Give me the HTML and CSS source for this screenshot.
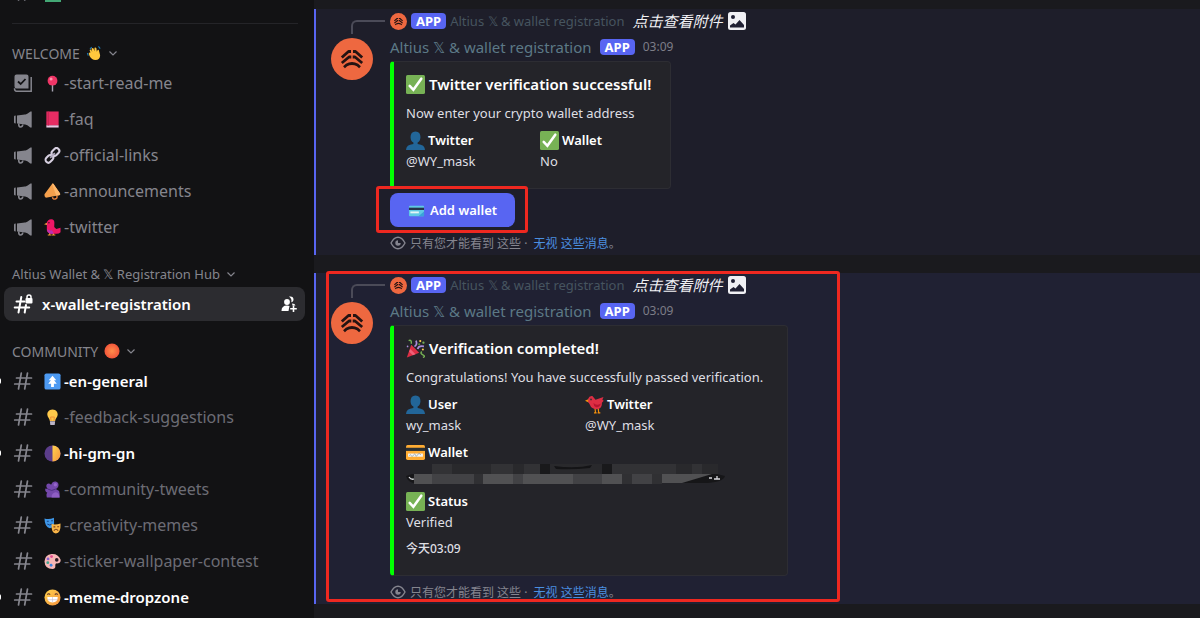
FILE: index.html
```html
<!DOCTYPE html>
<html lang="zh-CN">
<head>
  <meta charset="UTF-8">
  <meta name="viewport" content="width=device-width, initial-scale=1.0">
  <title>x-wallet-registration</title>
  <link rel="stylesheet" href="styles.css">
</head>
<body>
  <svg class="sprite" aria-hidden="true">
    <linearGradient id="g-sun" x1="0" y1="0" x2="1" y2="1"><stop offset="0" stop-color="#ffd34d"/><stop offset="1" stop-color="#f5923e"/></linearGradient>
    <radialGradient id="g-orb"><stop offset="0" stop-color="#ff8d4a"/><stop offset="1" stop-color="#f2553a"/></radialGradient>
    <symbol id="hash" viewBox="0 0 20 20"><path d="M8.300 2 5.500 18M14.500 2 11.700 18M3.500 7h15M1.700 13h15" fill="none" stroke="currentColor" stroke-width="1.700" stroke-linecap="round"/></symbol>
    <symbol id="hash-lock" viewBox="0 0 20 20"><path d="M8.300 3 5.500 18.500M13 11 11.700 18.500M3.500 7.500h8M1.700 13.500h14.500" fill="none" stroke="currentColor" stroke-width="2" stroke-linecap="round"/><rect x="12.500" y="4" width="7" height="5.500" rx="1" fill="currentColor"/><path d="M14 5V3a2 2 0 0 1 4 0v2" fill="none" stroke="currentColor" stroke-width="1.500"/></symbol>
    <symbol id="rules" viewBox="0 0 20 20"><path d="M3.500 1.500h10a2 2 0 0 1 2 2v12H3.500a2 2 0 0 1-2-2v-10a2 2 0 0 1 2-2z" fill="currentColor"/><path d="M5 8.500 7.700 11l4.800-5" fill="none" stroke="#121214" stroke-width="1.800"/><path d="M18.200 4v14.300H3.500q-2 0-2-3" fill="none" stroke="currentColor" stroke-width="1.500"/></symbol>
    <symbol id="mega" viewBox="0 0 20 20"><path d="M18.700 2.500v16h-1.500c-2-2-3.700-2.700-5.700-3.200V5.700c2.500-.7 4-1.500 6-3.200zM4 6.500l8-1v10l-8-1zM1 7.500q0-1 1.700-1v8Q1 14.500 1 13.500z" fill="currentColor"/><path d="M5.800 14.500q-.3 3.500 1.700 3.500t2.300-2.500" fill="none" stroke="currentColor" stroke-width="1.600"/></symbol>
    <symbol id="chev" viewBox="0 0 10 10"><path d="M1.500 3.500 5 7l3.500-3.500" fill="none" stroke="currentColor" stroke-width="1.200"/></symbol>
    <symbol id="invite" viewBox="0 0 18 18"><circle cx="7" cy="7" r="2.900" fill="currentColor"/><path d="M1.500 16q0-5.500 5.500-5.500 1.500 0 2.500.6l-1 4.900zM9 1.500c3-.5 4.500.5 4.500 3 0 1.500-.8 2.500-2.200 2.800C12 5 11 3 9 1.500zM12 8.500q3 0 3.500 2h-3z" fill="currentColor"/><path d="M13.500 10.500v6.500M10.200 13.700h6.600" stroke="currentColor" stroke-width="1.600"/></symbol>
    <symbol id="wave" viewBox="0 0 18 18"><path d="M2.500 12 1.500 9M4.500 4.500 6.500 2.500M14 1.500l2 2.500" stroke="#1a78b5" stroke-width="1.200"/><path d="M5 8.500 4 5.500q1-1.200 2 .2L7 8l-.8-4Q7.500 2.500 8.500 4l1 3 .1-3.800Q11 2 11.700 3.700l.5 4 .8-2.200q1.500-.6 1.600 1l1.300 5q0 5-5.400 5.500-4 0-6.500-4.500L3 9.500q.6-1.300 2-1z" fill="#ffc83d"/></symbol>
    <symbol id="pin" viewBox="0 0 18 18"><path d="M9 9v8.500" stroke="#a6a3b3" stroke-width="1.500"/><circle cx="9" cy="6" r="5.200" fill="#ef3566"/><circle cx="7.500" cy="4.300" r="1.600" fill="#ff94ad"/></symbol>
    <symbol id="book" viewBox="0 0 18 18"><path d="M2.500.5h13v15h-13z" fill="#e72c63"/><path d="M2.500 15.200h13v2.300h-13z" fill="#e8c8e5"/><path d="M4.500.5v15" stroke="#bd244f"/></symbol>
    <symbol id="link" viewBox="0 0 18 18"><g fill="none" stroke="#d6cfe0" stroke-width="2.200"><rect x="7.800" y="2.400" width="9" height="6" rx="3" transform="rotate(-45 12 5.500)"/><rect x="1.300" y="9.300" width="9" height="6" rx="3" transform="rotate(-45 6 12.500)"/></g><path d="M6.500 11.500l5-5" stroke="#b2aabf" stroke-width="1.800"/></symbol>
    <symbol id="horn" viewBox="0 0 18 18"><path d="M8.500 1q1-1 2 .5L17 11q.7 1.700-1 2L2 15.500q-2-1.200-1.500-3.500z" fill="#f5a04c"/><path d="M8.500 1 13 13.500l3-.5q1.700-.3 1-2L10.500 1.500Q9.500 0 8.500 1z" fill="#ffb86b"/><path d="M9 15q.3 3 3.500 1.700 2-1 1-3" fill="none" stroke="#e6823c" stroke-width="1.500"/></symbol>
    <symbol id="bird" viewBox="0 0 18 18"><path d="M6 14v3.500M10 14v3.500M4 17h4M8.500 17h3.500" stroke="#f59a2e" stroke-width="1.200"/><path d="M0 5.500 4 3.500v3z" fill="#f5a53a"/><path d="M3 4q1-4 5-3.700Q11 .5 11 4l-.2 4.500L13 10.500l4.500-1.300V14q-2 2-5.500 1.500H7Q2.500 14.500 3 10z" fill="#ef1766"/><path d="M3.500 10.500q2 2 5 1.500l2 3.500H7Q3 14.500 3.500 10.500z" fill="#b632b4"/><circle cx="5.200" cy="4" r=".8" fill="#3b1524"/></symbol>
    <symbol id="orb" viewBox="0 0 18 18"><circle cx="9" cy="9" r="8.500" fill="url(#g-orb)"/></symbol>
    <symbol id="up" viewBox="0 0 18 18"><rect x=".5" y=".5" width="17" height="17" rx="2" fill="#4d9af2"/><path d="M9 2.800 13 7.800h-2.300l2.800 3.700h-3v3.300h-3v-3.300h-3l2.800-3.700H5z" fill="#fff"/></symbol>
    <symbol id="bulb" viewBox="0 0 18 18"><path d="M9 .5c4 0 5.500 3 5.500 5.300 0 3-2.500 4-2.700 7H6.200c-.2-3-2.700-4-2.700-7C3.500 3.500 5 .5 9 .5z" fill="#ffc94a"/><path d="M7.500 12.500 7 8.500h4l-.5 4" fill="none" stroke="#f08d35"/><path d="M6.200 13h5.600l-.5 4H6.700z" fill="#bbb4c6"/></symbol>
    <symbol id="moon" viewBox="0 0 18 18"><circle cx="9" cy="9" r="8.500" fill="#5b3d8a"/><path d="M9 .5a8.500 8.500 0 0 1 0 17z" fill="url(#g-sun)"/></symbol>
    <symbol id="crowd" viewBox="0 0 18 18"><path d="M3 17.500q-1-4 .5-5Q.5 11 1.500 8L4 8.500Q1.500 6 3 3.500 5 1.500 7.500 4 9 0 12.500.5q4 1.500 2.500 5.500-1 2-2.500 2.500l3.500 2q1 3 .5 7z" fill="#7448ab"/><path d="M8 17.500q0-4.500 4-5.500 4 0 4.500 5.500z" fill="#8f5ec4"/><path d="M4 8.500q4 3 8.500 0" fill="none" stroke="#4c2c80"/><circle cx="12" cy="4" r="1.800" fill="#9565c9"/></symbol>
    <symbol id="masks" viewBox="0 0 18 18"><path d="M.5 1.500q5 1.500 10-.7l.2 5.700q-.7 5-4.500 5.300Q.8 11 .5 1.500z" fill="#3e97e8"/><path d="M3 4.500h2M7.500 4h2M3.500 7.500q2.500 2 5 0" stroke="#173c7c" fill="none"/><path d="M8 7.500q4.500 1 9.500-.7.500 10-5 10.700Q7.500 17.500 8 7.500z" fill="#f8b548"/><path d="M10 10.500h2M14 10.300h2M10.500 14.500q2-3 4.500 0" stroke="#7c431c" fill="none" stroke-width="1.200"/></symbol>
    <symbol id="palette" viewBox="0 0 18 18"><path d="M8 1Q15 .5 17.500 7q.7 3.500-3 4-3-.5-2.500 2.500.3 3.500-3 3.500Q1 17 .5 9 1 1.500 8 1z" fill="#f7b6b5"/><circle cx="8" cy="3.800" r="1.500" fill="#e44791"/><circle cx="4.300" cy="6.300" r="1.500" fill="#8963d0"/><circle cx="4" cy="10.200" r="1.500" fill="#3ea58e"/><circle cx="7.500" cy="13" r="1.500" fill="#3c83de"/><circle cx="13.500" cy="7.300" r="1.900" fill="#2c1a24"/></symbol>
    <symbol id="grin" viewBox="0 0 18 18"><circle cx="9" cy="9" r="8.500" fill="url(#g-sun)"/><path d="M3.500 6q1.500-2 3 0M11.500 6q1.500-2 3 0" fill="none" stroke="#583227" stroke-width="1.200"/><path d="M3.500 8.500h11q.3 5.500-5.500 5.700-5.700-.2-5.500-5.700z" fill="#fff"/><path d="M3.700 11.300h10.600M9 8.500v5.500" stroke="#c2b8ce" stroke-width=".6"/></symbol>
    <symbol id="check" viewBox="0 0 18 18"><rect width="18" height="18" rx="1.500" fill="#77b255"/><path d="M3.500 10.300 7 14l7.500-10.500" fill="none" stroke="#fff" stroke-width="2.400" stroke-linecap="round"/></symbol>
    <symbol id="person" viewBox="0 0 18 18"><path d="M9 .5q4.800.3 4.700 5.500-.3 4-2.700 5v1.300q7 .7 7 5.700H0q0-5 7-5.700V11Q4.500 10 4.300 6 4.200.8 9 .5z" fill="#226699"/></symbol>
    <symbol id="party" viewBox="0 0 18 18"><path d="M5 5.500 12.500 13 .8 17.500z" fill="#dd2e44"/><path d="M4 9.500l5 5-2.500 1L3 12z" fill="#ef6179"/><path d="M2.500 1.500q3-1.200 2.500 3M15 12q-2 1.500 1 3t0 2.500" fill="none" stroke="#77b255" stroke-width="1.300"/><path d="M8 7q3-1.500 1.500-5.500M11 9.500q1-3.500 6-2.500" fill="none" stroke="#aa8dd8" stroke-width="1.600"/><circle cx="13.500" cy="2" r="1" fill="#ffcc4d"/><circle cx="16.500" cy="3.500" r="1.100" fill="#77b255"/><circle cx="12.500" cy="5" r="1" fill="#5c913b"/><circle cx="16" cy="10" r="1" fill="#ffcc4d"/><circle cx="1.500" cy="7" r=".8" fill="#aa8dd8"/></symbol>
    <symbol id="redbird" viewBox="0 0 18 18"><path d="M9.500 12.500 10 17M12.500 12.500 13 17M8.500 17h2.500M12 17h2.500" stroke="#f4900c" stroke-width="1.100"/><path d="M0 5.500 4 3.500v3.800z" fill="#f4900c"/><path d="M3 3.500Q4 .5 7 1l3 3.500L17.500 2l-1 2.500 1.200 1L16 7.300q.5 5.500-4.500 6.200Q6 13.500 4.500 9L3 6.500z" fill="#dd2e44"/><path d="M8 7.500q3 3 7 .5-1 4-4.500 3.500Q8 10.500 8 7.500z" fill="#b81530"/><circle cx="5.700" cy="4.200" r=".8" fill="#292f33"/></symbol>
    <symbol id="card" viewBox="0 0 18 18"><rect y="2" width="18" height="14" rx="1.500" fill="#ffac33"/><path d="M0 4.500h18v3H0z" fill="#292f33"/><rect x="2" y="10" width="14" height="3" fill="#f4f7f9"/><path d="M3 12q1.500-2 2 0t2-.5 2 0 2-.3 3 .3" stroke="#8899a6" stroke-width=".7" fill="none"/></symbol>
    <symbol id="bluecard" viewBox="0 0 18 18"><rect x="1" y="4" width="16" height="11" rx="1" fill="#60c9e5"/><path d="M1 6h16v2.500H1z" fill="#26344a"/><rect x="2.500" y="10" width="9" height="2" fill="#e4f5f7"/><path d="M11 15l6-5v5z" fill="#3aa2d9"/></symbol>
    <symbol id="logo" viewBox="0 0 42 42"><circle cx="21" cy="21" r="21" fill="#ee6840"/><g fill="none" stroke="#241312" stroke-width="2.800" stroke-linejoin="bevel"><path d="M20 13.500h-2.500L10.800 19.500M22 13.500h2.500l6.700 6M20.300 19h-2.300L10.800 25M21.700 19h2.300l7.200 6M13 29.200l2.500-2.200q5.500-3 11 0l2.500 2.200"/></g></symbol>
    <symbol id="image" viewBox="0 0 18 18"><rect width="18" height="18" rx="2.500" fill="#f0f0f4"/><circle cx="5" cy="5" r="2" fill="#202033"/><path d="M2 15.500v-2l3.500-2.500 2 1.500L11.500 8l4.500 5v2.500z" fill="#202033"/></symbol>
    <symbol id="eye" viewBox="0 0 16 16"><path d="M1 8q3-5.800 7-5.800T15 8q-3 5.800-7 5.800T1 8z" fill="none" stroke="currentColor" stroke-width="1.400"/><path d="M8 5.300A2.700 2.700 0 1 0 10.700 8H8z" fill="currentColor"/></symbol>
  </svg>

  <div class="app">
    <nav class="sidebar">
      <div class="cut-row"><svg class="kind"><use href="#hash"/></svg><span class="green-box"></span></div>
      <hr>
      <button class="category caps" type="button">WELCOME <svg class="emo"><use href="#wave"/></svg><svg class="chev"><use href="#chev"/></svg></button>
      <ul>
        <li><a class="channel" href="#start"><svg class="kind"><use href="#rules"/></svg><svg class="emo"><use href="#pin"/></svg>-start-read-me</a></li>
        <li><a class="channel" href="#faq"><svg class="kind"><use href="#mega"/></svg><svg class="emo"><use href="#book"/></svg>-faq</a></li>
        <li><a class="channel" href="#links"><svg class="kind"><use href="#mega"/></svg><svg class="emo"><use href="#link"/></svg>-official-links</a></li>
        <li><a class="channel" href="#news"><svg class="kind"><use href="#mega"/></svg><svg class="emo"><use href="#horn"/></svg>-announcements</a></li>
        <li><a class="channel" href="#twitter"><svg class="kind"><use href="#mega"/></svg><svg class="emo"><use href="#bird"/></svg>-twitter</a></li>
      </ul>
      <button class="category" type="button">Altius Wallet &amp; 𝕏 Registration Hub<svg class="chev"><use href="#chev"/></svg></button>
      <ul>
        <li><a class="channel active" href="#wallet"><svg class="kind"><use href="#hash-lock"/></svg>x-wallet-registration<svg class="invite"><use href="#invite"/></svg></a></li>
      </ul>
      <button class="category caps" type="button">COMMUNITY <svg class="emo"><use href="#orb"/></svg><svg class="chev"><use href="#chev"/></svg></button>
      <ul>
        <li><a class="channel unread" href="#general"><svg class="kind"><use href="#hash"/></svg><svg class="emo"><use href="#up"/></svg>-en-general</a></li>
        <li><a class="channel muted" href="#feedback"><svg class="kind"><use href="#hash"/></svg><svg class="emo"><use href="#bulb"/></svg>-feedback-suggestions</a></li>
        <li><a class="channel unread" href="#gm"><svg class="kind"><use href="#hash"/></svg><svg class="emo"><use href="#moon"/></svg>-hi-gm-gn</a></li>
        <li><a class="channel muted" href="#tweets"><svg class="kind"><use href="#hash"/></svg><svg class="emo"><use href="#crowd"/></svg>-community-tweets</a></li>
        <li><a class="channel muted" href="#memes"><svg class="kind"><use href="#hash"/></svg><svg class="emo"><use href="#masks"/></svg>-creativity-memes</a></li>
        <li><a class="channel muted" href="#contest"><svg class="kind"><use href="#hash"/></svg><svg class="emo"><use href="#palette"/></svg>-sticker-wallpaper-contest</a></li>
        <li><a class="channel unread" href="#dropzone"><svg class="kind"><use href="#hash"/></svg><svg class="emo"><use href="#grin"/></svg>-meme-dropzone</a></li>
      </ul>
    </nav>

    <main class="chat">
      <article class="message">
        <div class="side"><span class="spine"></span><svg class="avatar"><use href="#logo"/></svg></div>
        <div class="body">
          <div class="reply"><svg class="mini"><use href="#logo"/></svg><span class="tag">APP</span><span class="reply-name">Altius 𝕏 &amp; wallet registration</span><em>点击查看附件</em><svg class="image"><use href="#image"/></svg></div>
          <div class="head"><span class="name">Altius 𝕏 &amp; wallet registration</span><span class="tag">APP</span><time>03:09</time></div>
          <div class="embed small">
            <h3><svg class="emoji"><use href="#check"/></svg>Twitter verification successful!</h3>
            <p>Now enter your crypto wallet address</p>
            <dl class="fields">
              <div><dt><svg class="emoji"><use href="#person"/></svg>Twitter</dt><dd>@WY_mask</dd></div>
              <div><dt><svg class="emoji"><use href="#check"/></svg>Wallet</dt><dd>No</dd></div>
            </dl>
          </div>
          <div class="actions"><button class="add" type="button"><svg class="emo"><use href="#bluecard"/></svg>Add wallet</button><span class="mark"></span></div>
          <div class="only-you"><svg class="eye"><use href="#eye"/></svg><span>只有您才能看到 这些 · <a href="#dismiss">无视 这些消息</a>。</span></div>
        </div>
      </article>

      <article class="message fresh">
        <div class="side"><span class="spine"></span><svg class="avatar"><use href="#logo"/></svg></div>
        <div class="body">
          <div class="reply"><svg class="mini"><use href="#logo"/></svg><span class="tag">APP</span><span class="reply-name">Altius 𝕏 &amp; wallet registration</span><em>点击查看附件</em><svg class="image"><use href="#image"/></svg></div>
          <div class="head"><span class="name">Altius 𝕏 &amp; wallet registration</span><span class="tag">APP</span><time>03:09</time></div>
          <div class="embed large">
            <h3><svg class="emoji"><use href="#party"/></svg>Verification completed!</h3>
            <p>Congratulations! You have successfully passed verification.</p>
            <dl class="fields">
              <div><dt><svg class="emoji"><use href="#person"/></svg>User</dt><dd>wy_mask</dd></div>
              <div><dt><svg class="emoji"><use href="#redbird"/></svg>Twitter</dt><dd>@WY_mask</dd></div>
              <div class="wide"><dt><svg class="emoji"><use href="#card"/></svg>Wallet</dt><dd>
                <svg class="mosaic" viewBox="0 0 320 22" role="img" aria-label="hidden">
                  <path d="M0 13q2 8 12 7h285q20 0 22-7l-8-2H6z" fill="#161618"/>
                  <path d="M26 1h20v10H26zM85 1h22v10H85zM118 1h16v10h-16zM205 1h65v10h-65zM286 1h10v10h-10z" fill="#323235"/>
                  <path d="M46 1h39v10H46zM107 1h11v10h-11zM144 1h52v10h-52zM270 1h16v10h-16zM296 1h16v10h-16z" fill="#29292c"/>
                  <path d="M134 1h10v10h-10zM196 1h10v10h-10z" fill="#19191b"/>
                  <path d="M148 3q22 3 38-1l-2 3q-18 2-34 1z" fill="#141416"/>
                  <path d="M8 11h18v10H8zM77 11h30v10H77zM117 11h50v10h-50zM196 11h20v10h-20zM256 11h50l-30 9h-20z" fill="#515153"/>
                  <path d="M26 11h42v10H26zM107 11h10v10h-10zM167 11h29v10h-29zM226 11h20v10h-20z" fill="#424245"/>
                  <path d="M68 11h9v10h-9zM216 11h10v10h-10zM246 11h10v10h-10z" fill="#303033"/>
                  <path d="M3 14q2 3 5 2M303 15h3M308 16h6M311 13v3" stroke="#d8d8dc" stroke-width="1.300" fill="none"/>
                </svg></dd></div>
              <div class="wide"><dt><svg class="emoji"><use href="#check"/></svg>Status</dt><dd>Verified</dd></div>
            </dl>
            <footer>今天03:09</footer>
          </div>
          <div class="only-you"><svg class="eye"><use href="#eye"/></svg><span>只有您才能看到 这些 · <a href="#dismiss">无视 这些消息</a>。</span></div>
        </div>
        <span class="mark"></span>
      </article>
    </main>
  </div>
</body>
</html>
```
FILE: styles.css
```css
* { box-sizing:border-box }
html, body { margin:0;height:100%;overflow:hidden }
body { background:#1a1a1e;color:#dfdfe3;font-family:"Noto Sans", "Noto Sans CJK SC", sans-serif;font-size:13px }
ul, dl, dd, h3, p { margin:0;padding:0 }
ul { list-style:none }
a { text-decoration:none }
button { border:none;font-family:inherit;cursor:pointer }
svg { flex:none }
.sprite { position:absolute;width:0;height:0 }
.app { display:flex;height:100% }

/* channel list */
.sidebar { background:#121214;flex:none;width:314px;overflow:hidden }
.cut-row { display:flex;align-items:flex-end;gap:1px;height:2px;padding-left:13px;color:#85858d;overflow:hidden }
.green-box { background:#43a775;width:16px;height:16px }
.sidebar hr { border:none;border-top:1px solid #242428;margin:21px 16px 16px 12px }
.category { display:flex;align-items:center;gap:6px;width:100%;height:26px;padding:0 12px;background:none;color:#85858d;font-size:13px;text-align:left }
.category.caps { font-size:14px }
.category .emo { width:16px;height:16px }
.chev { width:10px;height:10px }
.channel { display:flex;align-items:center;position:relative;height:34px;margin:0 9px 2px 4px;padding:0 7px 0 9px;border-radius:8px;color:#85858d;font-size:16px }
.kind { width:20px;height:20px;margin-right:11px }
.emo { width:17px;height:17px }
.channel .emo { margin-right:3px }
.channel.muted { color:#6c6c74 }
.channel.muted .kind, .channel.unread .kind { color:#85858d }
.channel.unread, .channel.active { color:#fff;font-size:15px;font-weight:600 }
.channel.unread::before { content:"";position:absolute;left:-7px;width:4px;height:6px;border-radius:3px;background:#fff }
.channel.active { background:#2c2c30 }
.channel.active .kind { margin-right:9px }
.invite { width:18px;height:18px;margin-left:auto }
.sidebar ul + .category { margin-top:17px }

/* messages */
.chat { flex:1;padding-top:9px;min-width:0 }
.message { display:flex;gap:17px;position:relative;margin-bottom:18px;padding:1px 0 0 15px;border-left:2px solid #5865f2;background:#1e1e2a }
.message.fresh { background:#202133 }
.side { flex:none;width:42px;padding-top:10px }
.spine { display:block;width:34px;height:14px;margin:0 0 4px 20px;border:solid #4b4b58;border-width:2px 0 0 2px;border-top-left-radius:6px }
.avatar { display:block;width:42px;height:42px }
.body { flex:1;min-width:0 }
.reply { display:flex;align-items:center;height:22px }
.mini { width:17px;height:17px;margin-right:4px }
.tag { padding:0 5px;border-radius:4px;background:#5865f2;color:#fff;font-size:13px;font-weight:700;line-height:16px }
.reply-name { margin:0 8px 0 4px;color:#46545f;font-size:13px }
.reply em { color:#f0f0f4;font-size:15px;line-height:20px }
.image { width:18px;height:18px;margin-left:6px }
.head { display:flex;align-items:center;height:29px }
.name { margin-right:8px;color:#5c7986;font-size:15px }
.head time { margin-left:8px;color:#7d7d87;font-size:12px }
.embed { padding:10px 15px 16px 12px;border:1px solid #2d2d33;border-left:4px solid #0f0;border-radius:4px;background:#242429 }
.embed.small { max-width:281px }
.embed.large { max-width:398px }
.embed h3 { display:flex;align-items:center;gap:4px;color:#fff;font-size:15px;font-weight:600;line-height:24px }
.embed p { margin-top:7px;line-height:21px;white-space:nowrap }
.fields { display:grid;gap:6px 0;margin-top:6px;line-height:21px }
.small .fields { grid-template-columns:134px 1fr }
.large .fields { grid-template-columns:179px 1fr }
.fields .wide { grid-column:1 / -1 }
.fields dt { display:flex;align-items:center;gap:3px;color:#fff;font-weight:600 }
.emoji { width:19px;height:19px }
.mosaic { display:block;width:320px;height:22px }
.embed footer { margin-top:5px;font-size:12px;font-weight:500;line-height:21px }
.actions { display:flex;position:relative;width:max-content;margin-top:4px }
.add { display:flex;align-items:center;gap:5px;height:34px;padding:0 18px;border-radius:8px;background:#5865f2;color:#fff;font-size:13px;font-weight:600 }
.only-you { display:flex;align-items:center;gap:4px;height:24px;margin-top:4px;color:#85858f;font-size:12px }
.only-you a { margin-left:3px;color:#4b8fe0 }
.eye { width:16px;height:16px }

/* red frames over the chat */
.mark { position:absolute;border:3px solid #ee2820;border-radius:3px;pointer-events:none }
.actions .mark { inset:-7px -13px -6px -14px }
.fresh > .mark { top:-2px;bottom:2px;left:10px;width:514px }
```
